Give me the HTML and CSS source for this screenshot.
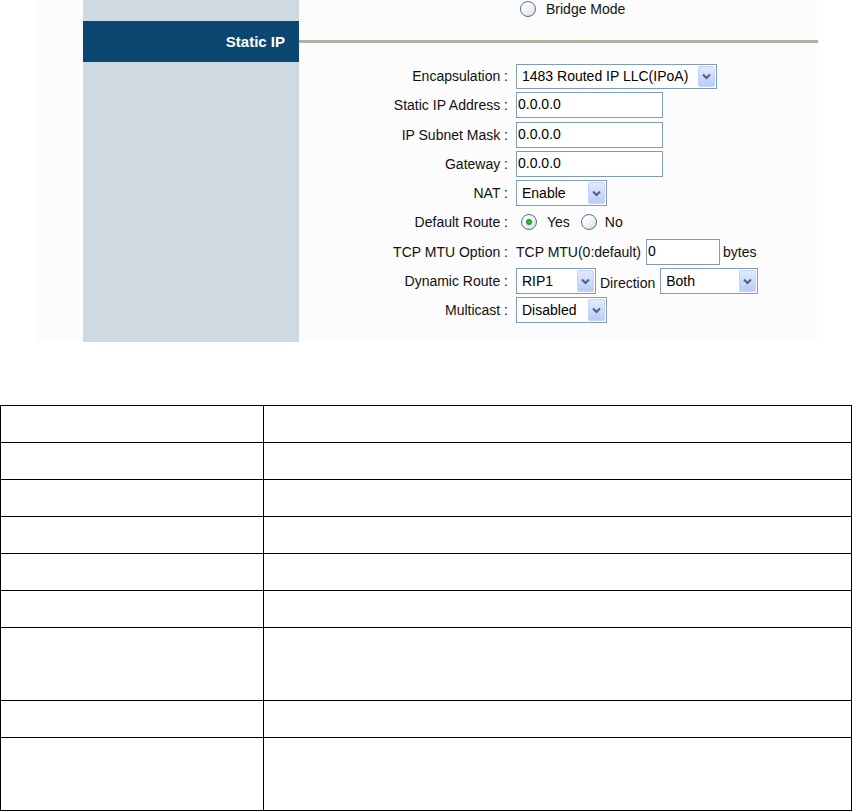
FILE: index.html
```html
<!DOCTYPE html>
<html lang="en">
<head>
    <meta charset="UTF-8">
    <meta name="viewport" content="width=device-width, initial-scale=1.0">
    <title>Static IP</title>
    <link rel="stylesheet" href="styles.css">
</head>
<body>
  <div class="shot">
    <div class="side">
      <div class="side-top"></div>
      <div class="side-head">Static IP</div>
    </div>
    <div class="main">
      <div class="top-row">
        <label class="opt"><input type="radio" name="mode"> Bridge Mode</label>
      </div>
      <div class="head-row"><div class="rule"></div></div>

      <form class="fields" action="">
        <span class="lbl">Encapsulation :</span>
        <span class="ctl">
          <span class="sel w-encap">
            <select><option>1483 Routed IP LLC(IPoA)</option></select>
            <span class="drop"><svg width="9" height="7" viewBox="0 0 9 7"><path d="M1 1.5 L4.5 5 L8 1.5" fill="none" stroke="#4d6185" stroke-width="2"/></svg></span>
          </span>
        </span>

        <span class="lbl">Static IP Address :</span>
        <span class="ctl"><input class="txt w-ip" type="text" value="0.0.0.0"></span>

        <span class="lbl">IP Subnet Mask :</span>
        <span class="ctl"><input class="txt w-ip" type="text" value="0.0.0.0"></span>

        <span class="lbl">Gateway :</span>
        <span class="ctl"><input class="txt w-ip" type="text" value="0.0.0.0"></span>

        <span class="lbl">NAT :</span>
        <span class="ctl">
          <span class="sel w-small">
            <select><option>Enable</option></select>
            <span class="drop"><svg width="9" height="7" viewBox="0 0 9 7"><path d="M1 1.5 L4.5 5 L8 1.5" fill="none" stroke="#4d6185" stroke-width="2"/></svg></span>
          </span>
        </span>

        <span class="lbl">Default Route :</span>
        <span class="ctl radios">
          <label class="opt"><input type="radio" name="route" checked> Yes</label>
          <label class="opt"><input type="radio" name="route"> No</label>
        </span>

        <span class="lbl">TCP MTU Option :</span>
        <span class="ctl mtu">
          TCP MTU(0:default)
          <input class="txt w-mtu" type="text" value="0">
          <span>bytes</span>
        </span>

        <span class="lbl">Dynamic Route :</span>
        <span class="ctl dyn">
          <span class="sel w-rip">
            <select><option>RIP1</option></select>
            <span class="drop"><svg width="9" height="7" viewBox="0 0 9 7"><path d="M1 1.5 L4.5 5 L8 1.5" fill="none" stroke="#4d6185" stroke-width="2"/></svg></span>
          </span>
          <span class="dir">Direction</span>
          <span class="sel w-dir">
            <select><option>Both</option></select>
            <span class="drop"><svg width="9" height="7" viewBox="0 0 9 7"><path d="M1 1.5 L4.5 5 L8 1.5" fill="none" stroke="#4d6185" stroke-width="2"/></svg></span>
          </span>
        </span>

        <span class="lbl">Multicast :</span>
        <span class="ctl">
          <span class="sel w-small">
            <select><option>Disabled</option></select>
            <span class="drop"><svg width="9" height="7" viewBox="0 0 9 7"><path d="M1 1.5 L4.5 5 L8 1.5" fill="none" stroke="#4d6185" stroke-width="2"/></svg></span>
          </span>
        </span>
      </form>
    </div>
  </div>

  <table class="desc">
    <tr><td class="c1"></td><td></td></tr>
    <tr><td class="c1"></td><td></td></tr>
    <tr><td class="c1"></td><td></td></tr>
    <tr><td class="c1"></td><td></td></tr>
    <tr><td class="c1"></td><td></td></tr>
    <tr><td class="c1"></td><td></td></tr>
    <tr class="tall"><td class="c1"></td><td></td></tr>
    <tr><td class="c1"></td><td></td></tr>
    <tr class="tall"><td class="c1"></td><td></td></tr>
  </table>
</body>
</html>
```

FILE: styles.css
```css
* {
  box-sizing: border-box;
}
body {
  margin: 0;
  background: #fff;
  font-family: "Liberation Sans", Arial, sans-serif;
  font-size: 14px;
  color: #111;
}

/* router screenshot */
.shot {
  display: flex;
  margin-left: 35px;
  width: 782px;
  height: 342px;
  padding-left: 48px;
  background: #fcfcfc;
}
.side {
  width: 216px;
  background: #cfd9e1;
}
.side-top {
  height: 21px;
}
.side-head {
  height: 41px;
  background: #0b4770;
  color: #fff;
  font-weight: bold;
  font-size: 15px;
  text-align: right;
  padding-right: 14px;
  line-height: 41px;
}
.main {
  flex: 1;
  margin-right: -1px;
}
.top-row {
  height: 21px;
  padding-left: 221px;
  display: flex;
  align-items: center;
  padding-bottom: 4px;
}
.head-row {
  height: 41px;
  padding-top: 19px;
}
.rule {
  height: 3px;
  background: #b5b1a0;
}

.fields {
  margin: 1px 0 0;
  display: grid;
  grid-template-columns: 209px auto;
  column-gap: 8px;
  row-gap: 3.3px;
  grid-auto-rows: 26px;
  align-items: center;
}
.lbl {
  text-align: right;
  white-space: nowrap;
}
.ctl {
  display: flex;
  align-items: center;
  height: 26px;
  white-space: nowrap;
}

.txt {
  height: 26px;
  border: 1px solid #7f9db9;
  background: #fff;
  font-family: inherit;
  font-size: 14px;
  color: #000;
  padding: 0 0 2px 1px;
  margin: 0;
  outline: none;
}
.w-ip { width: 147px; }
.w-mtu { width: 74px; margin: 0 3px 0 5px; }

.sel {
  position: relative;
  display: inline-block;
  height: 26px;
}
.sel select {
  -webkit-appearance: none;
  appearance: none;
  width: 100%;
  height: 100%;
  margin: 0;
  border: 1px solid #7f9db9;
  border-radius: 0;
  background: #fff;
  font-family: inherit;
  font-size: 14px;
  color: #000;
  padding: 0 0 0 5px;
}
.sel .drop {
  position: absolute;
  top: 2px;
  right: 2px;
  bottom: 2px;
  width: 17px;
  border: 1px solid #c3d3fd;
  border-radius: 2px;
  background: linear-gradient(#e2eafe, #b9ccf7);
  display: flex;
  align-items: center;
  justify-content: center;
}
.w-encap { width: 201px; height: 25px; }
.w-small { width: 91px; }
.w-rip { width: 80px; }
.w-dir { width: 98px; }
.dir { margin: 3px 5px 0 4px; }

.opt {
  display: inline-flex;
  align-items: center;
  gap: 10px;
}
input[type=radio] {
  -webkit-appearance: none;
  appearance: none;
  width: 16px;
  height: 16px;
  margin: 0;
  border: 1px solid #4a73a0;
  border-radius: 50%;
  background: linear-gradient(135deg, #ffffff 25%, #d9dcd9);
}
input[type=radio]:checked {
  background: radial-gradient(circle, #45c345 0, #1f9a1f 2.5px, transparent 3.6px), linear-gradient(135deg, #ffffff 25%, #d9dcd9);
}
.radios {
  padding-left: 5px;
}
.radios .opt + .opt {
  margin-left: 11px;
  gap: 8px;
}
.mtu {
  padding-top: 1px;
}

/* description table */
.desc {
  margin-top: 63px;
  width: 852px;
  border-collapse: collapse;
}
.desc td {
  border: 1px solid #000;
  padding: 0;
}
.desc tr {
  height: 37px;
}
.desc tr.tall {
  height: 73px;
}
.desc .c1 {
  width: 263px;
}
```
